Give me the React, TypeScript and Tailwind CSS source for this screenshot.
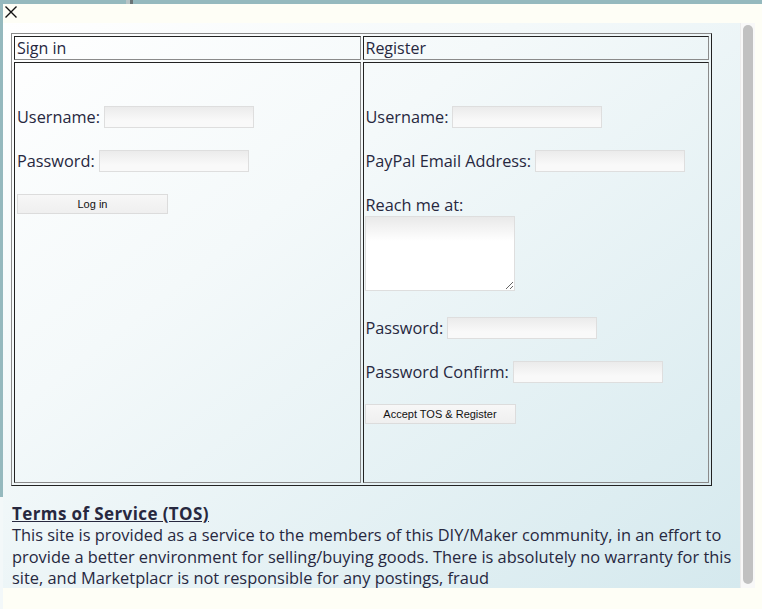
import React from "react";

const inputCls =
  "h-[22px] w-[150px] border border-[#dedede] bg-[linear-gradient(#ebebeb,#f9f9f9_70%)] outline-none";
const labelCls = "text-[16.3px] leading-[22px] mr-[4px]";
const btnCls =
  "h-[20px] w-[151px] border border-[#dcdcdc] bg-[linear-gradient(#f7f7f7,#efefef)] text-[11px] leading-[18px] text-[#111] [font-family:'Liberation_Sans',Arial,sans-serif]";

function Row({ label, className = "" }: { label: string; className?: string }) {
  return (
    <div className={"flex items-center " + className}>
      <span className={labelCls}>{label}</span>
      <input className={inputCls} />
    </div>
  );
}

export default function App() {
  return (
    <div className="relative h-[609px] w-[762px] overflow-hidden bg-[linear-gradient(#95b9be_0px,#95b9be_497px,#f3f8f9_497px)] text-[#27283f] [font-family:'Open_Sans',sans-serif]">
      {/* background page decoration */}
      <div className="absolute left-[126px] top-0 h-[4px] w-[7px] bg-[#b8c4c6] border-r-[3px] border-[#6a7476]" />
      {/* modal */}
      <div className="absolute left-[3px] top-[4px] h-[605px] w-[759px] bg-[#fefef6]">
        <div className="h-[19px] pl-[1px] pt-[1px]">
          <svg width="14" height="14" viewBox="0 0 14 14">
            <path d="M1.5 1.5 L12.5 12.5 M12.5 1.5 L1.5 12.5" stroke="#111" strokeWidth="1.4" />
          </svg>
        </div>
        <div className="flex h-[565px] w-[752px]">
          <div className="w-[737px] overflow-hidden bg-[linear-gradient(to_bottom_right,#ffffff_0%,#f4f9fa_35%,#d5e9ee_100%)] pl-[8px] pt-[10px]">
            {/* table */}
            <div className="w-[701px] border border-t-[#8a8a8a] border-l-[#8a8a8a] border-b-[#222] border-r-[#222] p-[2px]">
              <div className="grid grid-cols-2 gap-[2px]">
                <div className="h-[24px] border border-t-[#222] border-l-[#222] border-b-[#8a8a8a] border-r-[#8a8a8a] pl-[2px] text-[16px] leading-[22px]">
                  Sign in
                </div>
                <div className="h-[24px] border border-t-[#222] border-l-[#222] border-b-[#8a8a8a] border-r-[#8a8a8a] pl-[2px] text-[16px] leading-[22px]">
                  Register
                </div>
                <div className="h-[421px] border border-t-[#222] border-l-[#222] border-b-[#8a8a8a] border-r-[#8a8a8a] pl-[2px] pt-[43px]">
                  <Row label="Username:" />
                  <Row label="Password:" className="mt-[22px]" />
                  <button className={btnCls + " mt-[22px] block"}>Log in</button>
                </div>
                <div className="h-[421px] border border-t-[#222] border-l-[#222] border-b-[#8a8a8a] border-r-[#8a8a8a] pl-[2px] pt-[43px]">
                  <Row label="Username:" />
                  <Row label="PayPal Email Address:" className="mt-[22px]" />
                  <div className="mt-[22px] text-[16.3px] leading-[22px]">Reach me at:</div>
                  <textarea className="ml-[-1px] block h-[75px] w-[150px] resize border border-[#dedede] bg-[linear-gradient(#e9e9e9,#ffffff_24px)] outline-none" />
                  <Row label="Password:" className="mt-[26px]" />
                  <Row label="Password Confirm:" className="mt-[22px]" />
                  <button className={btnCls + " mt-[21px] ml-[-1px] block w-[150px]"}>Accept TOS &amp; Register</button>
                </div>
              </div>
            </div>
            <div className="ml-[1px] mt-[17px] pr-[8px] text-[16.4px] leading-[21.5px]">
              <div className="text-[17px] font-bold tracking-[0.4px] underline leading-[21px]">Terms of Service (TOS)</div>
              <p>
                This site is provided as a service to the members of this DIY/Maker community, in an effort to
                provide a better environment for selling/buying goods. There is absolutely no warranty for this
                site, and Marketplacr is not responsible for any postings, fraud
              </p>
            </div>
          </div>
          {/* scrollbar */}
          <div className="w-[15px] border-l border-[#ececec] bg-[#f8f8f8] px-[2px] pt-[2px]">
            <div className="h-[559px] w-[10px] rounded-full bg-[#c1c1c1]" />
          </div>
        </div>
      </div>
    </div>
  );
}
